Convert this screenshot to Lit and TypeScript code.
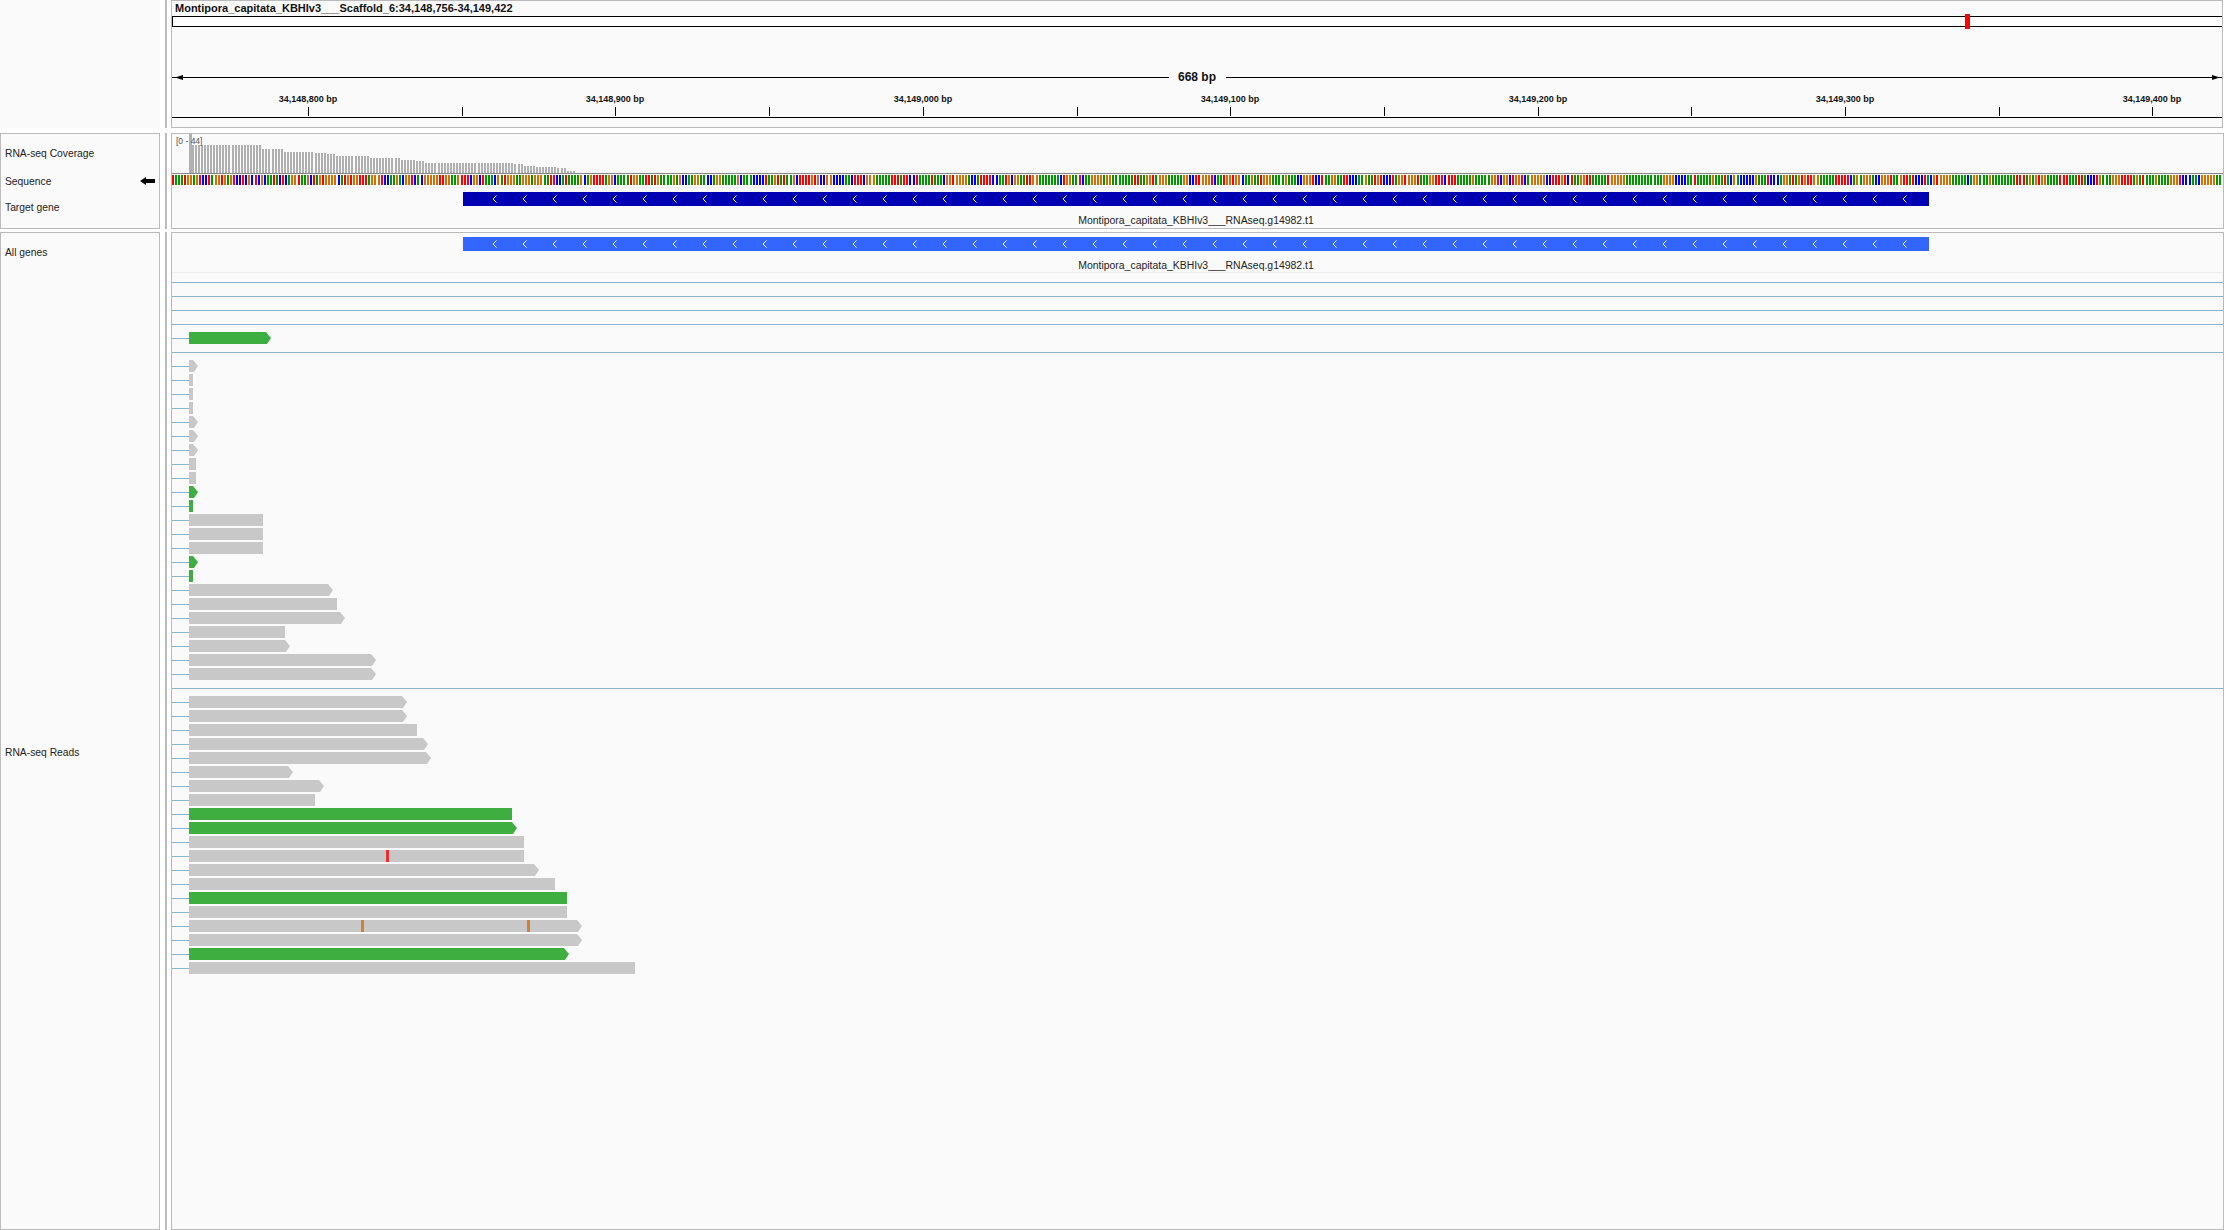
import { LitElement, html, svg, css } from "lit";
import { customElement } from "lit/decorators.js";

type Read = { end: number; arrow?: boolean; green?: boolean; marks?: { x: number; c: string }[] } | null;

const RED = "#ee2f2f";
const ORANGE = "#cc8433";

const READS: Read[] = [
  null, null, null, null,
  { end: 271, arrow: true, green: true },
  null,
  { end: 198, arrow: true },
  { end: 193 }, { end: 193 }, { end: 193 },
  { end: 198, arrow: true }, { end: 198, arrow: true }, { end: 198, arrow: true },
  { end: 196 }, { end: 196 },
  { end: 198, arrow: true, green: true },
  { end: 193, green: true },
  { end: 263 }, { end: 263 }, { end: 263 },
  { end: 198, arrow: true, green: true },
  { end: 193, green: true },
  { end: 333, arrow: true },
  { end: 337 },
  { end: 345, arrow: true },
  { end: 285 },
  { end: 290, arrow: true },
  { end: 376, arrow: true },
  { end: 376, arrow: true },
  null,
  { end: 407, arrow: true },
  { end: 407, arrow: true },
  { end: 417 },
  { end: 428, arrow: true },
  { end: 431, arrow: true },
  { end: 293, arrow: true },
  { end: 324, arrow: true },
  { end: 315 },
  { end: 512, green: true },
  { end: 517, arrow: true, green: true },
  { end: 524 },
  { end: 524, marks: [{ x: 386, c: RED }] },
  { end: 539, arrow: true },
  { end: 555 },
  { end: 567, green: true },
  { end: 567 },
  { end: 582, arrow: true, marks: [{ x: 361, c: ORANGE }, { x: 527, c: ORANGE }] },
  { end: 582, arrow: true },
  { end: 569, arrow: true, green: true },
  { end: 635 },
];

const COVERAGE: [number, number][] = [
  [192, 39], [262, 28], [283.5, 24], [314.3, 21], [326, 20], [336, 19], [369, 17], [400.5, 15],
  [415, 13], [423, 12], [512, 10], [524, 9], [534, 7], [555.5, 6], [565.4, 5], [575.3, 2],
];

const START_BASES = "TAAATGGAGTCCTAGGTGAGTCCTCGCTCGCAATACTCAGGTAAGCTAGTGGGGCATGTGGTTTAGGGTCCAAGACGGTC";

function buildBases(): string {
  let s = 0x2f6e2b1;
  let out = START_BASES;
  const rnd = () => {
    s = (s + 0x6d2b79f5) | 0;
    let t = Math.imul(s ^ (s >>> 15), 1 | s);
    t = (t + Math.imul(t ^ (t >>> 7), 61 | t)) ^ t;
    return ((t ^ (t >>> 14)) >>> 0) / 4294967296;
  };
  let prev = "A";
  while (out.length < 667) {
    // Runs of the same base, as in the real sequence.
    if (rnd() > 0.3) {
      const r = rnd();
      prev = r < 0.38 ? "A" : r < 0.62 ? "T" : r < 0.84 ? "G" : "C";
    }
    out += prev;
  }
  return out;
}

const BASE_COLOURS: Record<string, string> = {
  A: "rgb(0,150,0)",
  C: "rgb(0,0,255)",
  G: "rgb(209,113,5)",
  T: "rgb(255,0,0)",
};

function seqPaths() {
  const bases = buildBases();
  const d: Record<string, string> = { A: "", C: "", G: "", T: "" };
  for (let i = 0; i < bases.length; i++) {
    const x = Math.floor(3.0748 * i);
    d[bases[i]] += `M${x} 0h2v10h-2z`;
  }
  return Object.keys(d).map((k) => ({ fill: BASE_COLOURS[k], d: d[k] }));
}

function coveragePath() {
  let d = "M17 0h3v39h-3z";
  for (let j = 1; j < 126; j++) {
    const px = 189 + 3.0748 * j;
    const seg = COVERAGE.find((c) => px < c[0]);
    if (!seg) break;
    d += `M${Math.floor(px) - 172} ${39 - seg[1]}h2v${seg[1]}h-2z`;
  }
  return d;
}

const TICKS = Array.from({ length: 13 }, (_, k) => {
  const bp = 34148800 + k * 50;
  return {
    x: Math.round(308 + 153.7 * k) - 172,
    label: k % 2 === 0 ? `${bp.toLocaleString("en-US")} bp` : "",
  };
});

const CHEVRONS = Array.from({ length: 48 }, (_, k) => `M${33.5 + 30 * k} 3.5L${30 + 30 * k} 7L${33.5 + 30 * k} 10.5`).join("");

@customElement("app-root")
export class AppRoot extends LitElement {
  static styles = css`
    :host {
      display: block;
      width: 2240px;
      height: 1230px;
      overflow: hidden;
      background: #fff;
      font-family: "Liberation Sans", Arial, sans-serif;
      color: #222;
    }
    .page {
      display: flex;
      flex-direction: column;
      height: 1230px;
    }
    .row {
      display: flex;
      flex: none;
    }
    .row.head {
      height: 128px;
      margin-bottom: 5px;
    }
    .row.mid {
      height: 96px;
      margin-bottom: 3px;
    }
    .row.main {
      flex: 1;
      min-height: 0;
    }
    .names {
      box-sizing: border-box;
      width: 160px;
      flex: none;
      background: #fafafa;
      border: 1px solid #bbb;
      font-size: 10.3px;
      line-height: 12px;
      padding-left: 4px;
      padding-right: 4px;
      display: flex;
      flex-direction: column;
    }
    .names.blank {
      border: none;
    }
    .names.mid {
      padding-top: 14px;
      gap: 16px;
    }
    .names.main {
      padding-top: 14px;
    }
    .seq-name {
      display: flex;
      justify-content: space-between;
      align-items: flex-start;
    }
    .seq-name svg {
      display: block;
      margin-top: 1px;
    }
    .target {
      margin-top: -2px;
    }
    .reads-name {
      margin-top: 488px;
    }
    .gutter {
      width: 2px;
      flex: none;
      margin: 0 4px 0 5px;
      background: #bbb;
    }
    .data {
      box-sizing: border-box;
      width: 2053px;
      flex: none;
      background: #fafafa;
      border: 1px solid #bbb;
    }
    .data.head {
      width: 2052px;
    }
    .location {
      height: 15px;
      line-height: 14px;
      padding-left: 3px;
      font-size: 11px;
      font-weight: bold;
      color: #111;
      white-space: nowrap;
    }
    .ideogram {
      position: relative;
      box-sizing: border-box;
      height: 11px;
      background: #fff;
      border: 1px solid #000;
      border-right: none;
    }
    .cyto {
      position: absolute;
      left: 1792px;
      top: -3px;
      width: 5px;
      height: 15px;
      background: #f00;
    }
    .span {
      display: flex;
      align-items: center;
      height: 13px;
      margin-top: 44px;
    }
    .span-line {
      position: relative;
      flex: 1;
      height: 1px;
      background: #000;
    }
    .span-line::before {
      content: "";
      position: absolute;
      top: -2px;
      width: 8px;
      height: 5px;
      background: #000;
    }
    .span-line.left::before {
      left: 3px;
      clip-path: polygon(0 50%, 100% 0, 100% 100%);
    }
    .span-line.right::before {
      right: 2px;
      clip-path: polygon(100% 50%, 0 0, 0 100%);
    }
    .span-text {
      width: 57px;
      text-align: center;
      font-size: 12px;
      font-weight: bold;
      line-height: 13px;
      color: #111;
    }
    .ruler {
      position: relative;
      height: 33px;
      border-bottom: 1px solid #000;
    }
    .tick {
      position: absolute;
      top: 23px;
      width: 1px;
      height: 9px;
      background: #000;
    }
    .tick-label {
      position: absolute;
      top: -14px;
      left: 0;
      transform: translateX(-50%);
      font-size: 9px;
      font-weight: bold;
      line-height: 12px;
      white-space: nowrap;
      color: #111;
    }
    .coverage {
      position: relative;
      height: 39px;
      border-bottom: 1px solid #888;
    }
    .coverage svg,
    .seq svg,
    .gene svg {
      display: block;
    }
    .range {
      position: absolute;
      left: 4px;
      top: 1px;
      font-size: 8.5px;
      line-height: 12px;
      color: #555;
    }
    .seq {
      margin-top: 1px;
      padding-bottom: 2px;
      border-bottom: 1px solid #eee;
    }
    .gene-wrap {
      margin-left: 291px;
      width: 1466px;
      padding-top: 4px;
    }
    .gene {
      height: 14px;
      background: #0000b2;
    }
    .gene.all {
      background: #3366ff;
    }
    .gene-label {
      margin-top: 9px;
      font-size: 10.45px;
      line-height: 12px;
      text-align: center;
      color: #222;
    }
    .track-end {
      margin-top: 0;
      border-bottom: 1px solid #eee;
      margin-bottom: 2px;
    }
    .reads {
      display: flex;
      flex-direction: column;
    }
    .read-row {
      display: flex;
      align-items: flex-start;
      box-sizing: border-box;
      height: 14px;
      padding-top: 1px;
    }
    .full {
      flex: 1;
      height: 1px;
      margin-top: 6px;
      background: #8fb5c9;
    }
    .stub {
      width: 17px;
      height: 1px;
      margin-top: 6px;
      flex: none;
      background: #8fb5c9;
    }
    .read {
      position: relative;
      height: 12px;
      flex: none;
      background: #c8c8c8;
    }
    .read.green {
      background: #3fae40;
    }
    .read.arrow {
      clip-path: polygon(0 0, calc(100% - 5px) 0, 100% 50%, calc(100% - 4px) 100%, 0 100%);
    }
    .mark {
      position: absolute;
      top: 0;
      width: 3px;
      height: 12px;
    }
  `;

  private seq = seqPaths();
  private cov = coveragePath();

  private gene(cls: string) {
    return html`<div class="gene-wrap">
      <div class="gene ${cls}">
        <svg width="1466" height="14" viewBox="0 0 1466 14">
          <path d=${CHEVRONS} fill="none" stroke="#fff" stroke-width="1"></path>
        </svg>
      </div>
      <div class="gene-label">Montipora_capitata_KBHIv3___RNAseq.g14982.t1</div>
    </div>`;
  }

  render() {
    return html`<div class="page">
      <div class="row head">
        <div class="names blank"></div>
        <div class="gutter"></div>
        <div class="data head">
          <div class="location">Montipora_capitata_KBHIv3___Scaffold_6:34,148,756-34,149,422</div>
          <div class="ideogram"><div class="cyto"></div></div>
          <div class="span">
            <div class="span-line left"></div>
            <div class="span-text">668 bp</div>
            <div class="span-line right"></div>
          </div>
          <div class="ruler">
            ${TICKS.map(
              (t) => html`<div class="tick" style="left:${t.x}px">
                ${t.label ? html`<div class="tick-label">${t.label}</div>` : ""}
              </div>`
            )}
          </div>
        </div>
      </div>

      <div class="row mid">
        <div class="names mid">
          <div>RNA-seq Coverage</div>
          <div class="seq-name">
            <span>Sequence</span>
            <svg width="15" height="8" viewBox="0 0 15 8"><polygon points="0,4 6,0 6,2 15,2 15,6 6,6 6,8" fill="#000"></polygon></svg>
          </div>
          <div class="target">Target gene</div>
        </div>
        <div class="gutter"></div>
        <div class="data">
          <div class="coverage">
            <svg width="2051" height="39" viewBox="0 0 2051 39" shape-rendering="crispEdges">
              <path d=${this.cov} fill="#b0b0b0"></path>
            </svg>
            <div class="range">[0 - 44]</div>
          </div>
          <div class="seq">
            <svg width="2051" height="10" viewBox="0 0 2051 10" shape-rendering="crispEdges">
              ${this.seq.map((p) => svg`<path d=${p.d} fill=${p.fill}></path>`)}
            </svg>
          </div>
          ${this.gene("")}
        </div>
      </div>

      <div class="row main">
        <div class="names main">
          <div>All genes</div>
          <div class="reads-name">RNA-seq Reads</div>
        </div>
        <div class="gutter"></div>
        <div class="data">
          ${this.gene("all")}
          <div class="track-end"></div>
          <div class="reads">
            ${READS.map((r) =>
              r
                ? html`<div class="read-row">
                    <div class="stub"></div>
                    <div
                      class="read ${r.green ? "green" : ""} ${r.arrow ? "arrow" : ""}"
                      style="width:${r.end - 189}px"
                    >
                      ${(r.marks ?? []).map(
                        (m) => html`<div class="mark" style="left:${m.x - 189}px;background:${m.c}"></div>`
                      )}
                    </div>
                  </div>`
                : html`<div class="read-row"><div class="full"></div></div>`
            )}
          </div>
        </div>
      </div>
    </div>`;
  }
}
